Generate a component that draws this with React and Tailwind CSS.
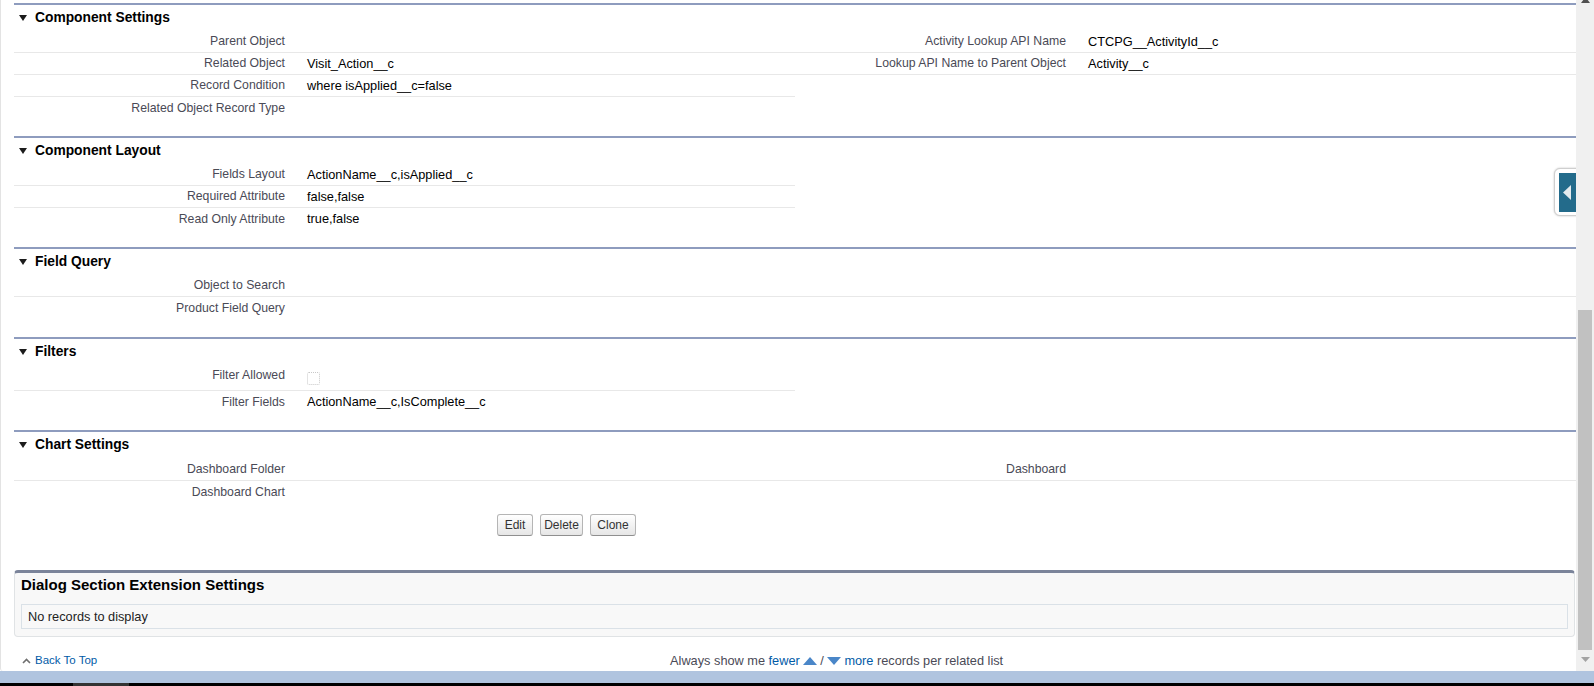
import React from "react";

const labelCls = "w-[281px] shrink-0 pr-[10px] text-right text-[12.25px] text-[#4a4a56] whitespace-nowrap";
const valueCls = "pl-[12px] text-[12.75px] text-black whitespace-nowrap";

function Half({ label = "", value = "", border = false }) {
  return (
    <div
      className={
        border
          ? "flex w-[781px] items-center border-b border-[#e8e8e8]"
          : "flex w-[781px] items-center"
      }
    >
      <div className={labelCls}>{label}</div>
      <div className={valueCls}>{value}</div>
    </div>
  );
}

function Row({ left = {}, right = {} }) {
  return (
    <div className="flex h-[22px]">
      <Half {...left} />
      <Half {...right} />
    </div>
  );
}

function Header({ title }) {
  return (
    <div className="h-[26px] pt-[5px]">
      <div className="flex h-[16px] items-center pl-[5px]">
        <svg width="8" height="6" viewBox="0 0 8 6" className="shrink-0">
          <polygon points="0,0 8,0 4,6" fill="#1c1c1c" />
        </svg>
        <span className="ml-[8px] text-[13.8px] font-bold leading-[16px] text-black">{title}</span>
      </div>
    </div>
  );
}

function Btn({ children, w }) {
  return (
    <button
      className={
        "h-[22px] rounded-[3px] border border-[#b5b5b5] border-b-[#8f8f8f] bg-gradient-to-b from-[#ffffff] to-[#e6e6e6] text-[12px] text-[#333] leading-none " +
        w
      }
    >
      {children}
    </button>
  );
}

export default function App() {
  return (
    <div className="relative h-[686px] w-[1594px] overflow-hidden bg-white font-['Liberation_Sans',Arial,sans-serif]">
      <div className="flex h-[671px]">
        <div className="relative h-[671px] w-[1576px] overflow-hidden rounded-bl-[3px] border-l border-[#e3e3e3] bg-white pl-[13px] pt-[3px]">
          {/* Component Settings */}
          <div className="border-t-2 border-[#8e9cbe] pb-[17px]">
            <Header title="Component Settings" />
            <Row
              left={{ label: "Parent Object", border: true }}
              right={{ label: "Activity Lookup API Name", value: "CTCPG__ActivityId__c", border: true }}
            />
            <Row
              left={{ label: "Related Object", value: "Visit_Action__c", border: true }}
              right={{ label: "Lookup API Name to Parent Object", value: "Activity__c", border: true }}
            />
            <Row left={{ label: "Record Condition", value: "where isApplied__c=false", border: true }} />
            <Row left={{ label: "Related Object Record Type" }} />
          </div>

          {/* Component Layout */}
          <div className="border-t-2 border-[#8e9cbe] pb-[17px]">
            <Header title="Component Layout" />
            <Row left={{ label: "Fields Layout", value: "ActionName__c,isApplied__c", border: true }} />
            <Row left={{ label: "Required Attribute", value: "false,false", border: true }} />
            <Row left={{ label: "Read Only Attribute", value: "true,false" }} />
          </div>

          {/* Field Query */}
          <div className="border-t-2 border-[#8e9cbe] pb-[18px]">
            <Header title="Field Query" />
            <Row left={{ label: "Object to Search", border: true }} right={{ border: true }} />
            <Row left={{ label: "Product Field Query" }} />
          </div>

          {/* Filters */}
          <div className="border-t-2 border-[#8e9cbe] pb-[17px]">
            <Header title="Filters" />
            <div className="flex h-[26px]">
              <div className="flex w-[781px] items-start border-b border-[#e8e8e8]">
                <div className={labelCls + " pt-[3px] leading-[15px]"}>Filter Allowed</div>
                <div className="pl-[12px] pt-[7px]">
                  <div className="h-[13px] w-[13px] rounded-[2px] border border-dotted border-[#c8c8c8] bg-white" />
                </div>
              </div>
              <div className="w-[781px]" />
            </div>
            <Row left={{ label: "Filter Fields", value: "ActionName__c,IsComplete__c" }} />
          </div>

          {/* Chart Settings */}
          <div className="border-t-2 border-[#8e9cbe]">
            <Header title="Chart Settings" />
            <div className="pt-[1px]">
              <Row left={{ label: "Dashboard Folder", border: true }} right={{ label: "Dashboard", border: true }} />
              <Row left={{ label: "Dashboard Chart" }} />
            </div>
            <div className="mt-[11px] flex gap-[7px] pl-[483px]">
              <Btn w="w-[36px]">Edit</Btn>
              <Btn w="w-[43px]">Delete</Btn>
              <Btn w="w-[46px]">Clone</Btn>
            </div>
          </div>

          {/* Dialog Section Extension Settings */}
          <div className="mr-[1px] mt-[34px] rounded-[4px] border border-t-[3px] border-[#e0e3e5] border-t-[#7b849a] bg-[#f8f8f8] pb-[7px]">
            <div className="flex h-[24px] items-center pl-[6px] text-[15px] font-bold text-black">
              Dialog Section Extension Settings
            </div>
            <div className="mx-[6px] mt-[7px] flex h-[25px] items-center border border-[#dae1e7] bg-[#f8f8f8] pl-[6px] text-[12.75px] text-[#222]">
              No records to display
            </div>
          </div>

          {/* Footer */}
          <div className="mt-[15px] flex h-[18px] items-center">
            <div className="flex items-center pl-[8px] text-[11.5px] text-[#015ba7]">
              <svg width="9" height="6" viewBox="0 0 9 6">
                <polyline points="1,5 4.5,1.5 8,5" fill="none" stroke="#6f6f6f" strokeWidth="1.6" />
              </svg>
              <span className="ml-[4px]">Back To Top</span>
            </div>
            <div className="flex-1 text-center text-[12.75px] text-[#4a4a56]">
              Always show me <span className="text-[#015ba7]">fewer</span>
              <svg width="14" height="8" viewBox="0 0 14 8" className="ml-[3px] inline-block align-[0px]">
                <polygon points="7,0 14,8 0,8" fill="#4a86c8" />
              </svg>{" "}
              /{" "}
              <svg width="14" height="8" viewBox="0 0 14 8" className="mr-[3px] inline-block align-[0px]">
                <polygon points="0,0 14,0 7,8" fill="#4a86c8" />
              </svg>
              <span className="text-[#015ba7]">more</span> records per related list
            </div>
          </div>

          {/* Right side collapse tab */}
          <div className="absolute left-[1553px] top-[168px] h-[48px] w-[30px] rounded-l-[6px] border border-[#cfcfcf] bg-white shadow-[0_0_2px_rgba(0,0,0,0.25)]">
            <div className="absolute left-[4px] top-[4px] h-[39px] w-[24px] bg-[#236b8b]">
              <svg width="8" height="15" viewBox="0 0 8 15" className="absolute left-[4px] top-[12px]">
                <polygon points="8,0 8,15 0,7.5" fill="#e3eaee" />
              </svg>
            </div>
          </div>
        </div>

        {/* Scrollbar */}
        <div className="relative h-[671px] w-[18px] bg-[#f0f0f0]">
          <svg width="9" height="6" viewBox="0 0 9 6" className="absolute left-[5px] top-[-3px]">
            <polygon points="4.5,0 9,6 0,6" fill="#505050" />
          </svg>
          <div className="absolute left-[2px] top-[310px] h-[340px] w-[14px] bg-[#c1c1c1]" />
          <svg width="9" height="5" viewBox="0 0 9 5" className="absolute left-[5px] top-[657px]">
            <polygon points="0,0 9,0 4.5,5" fill="#a3a3a3" />
          </svg>
        </div>
      </div>
      <div className="h-[12px] bg-[#b0c4df]" />
      <div className="flex h-[3px] bg-black">
        <div className="ml-[73px] w-[56px] bg-[#333]" />
      </div>
    </div>
  );
}
